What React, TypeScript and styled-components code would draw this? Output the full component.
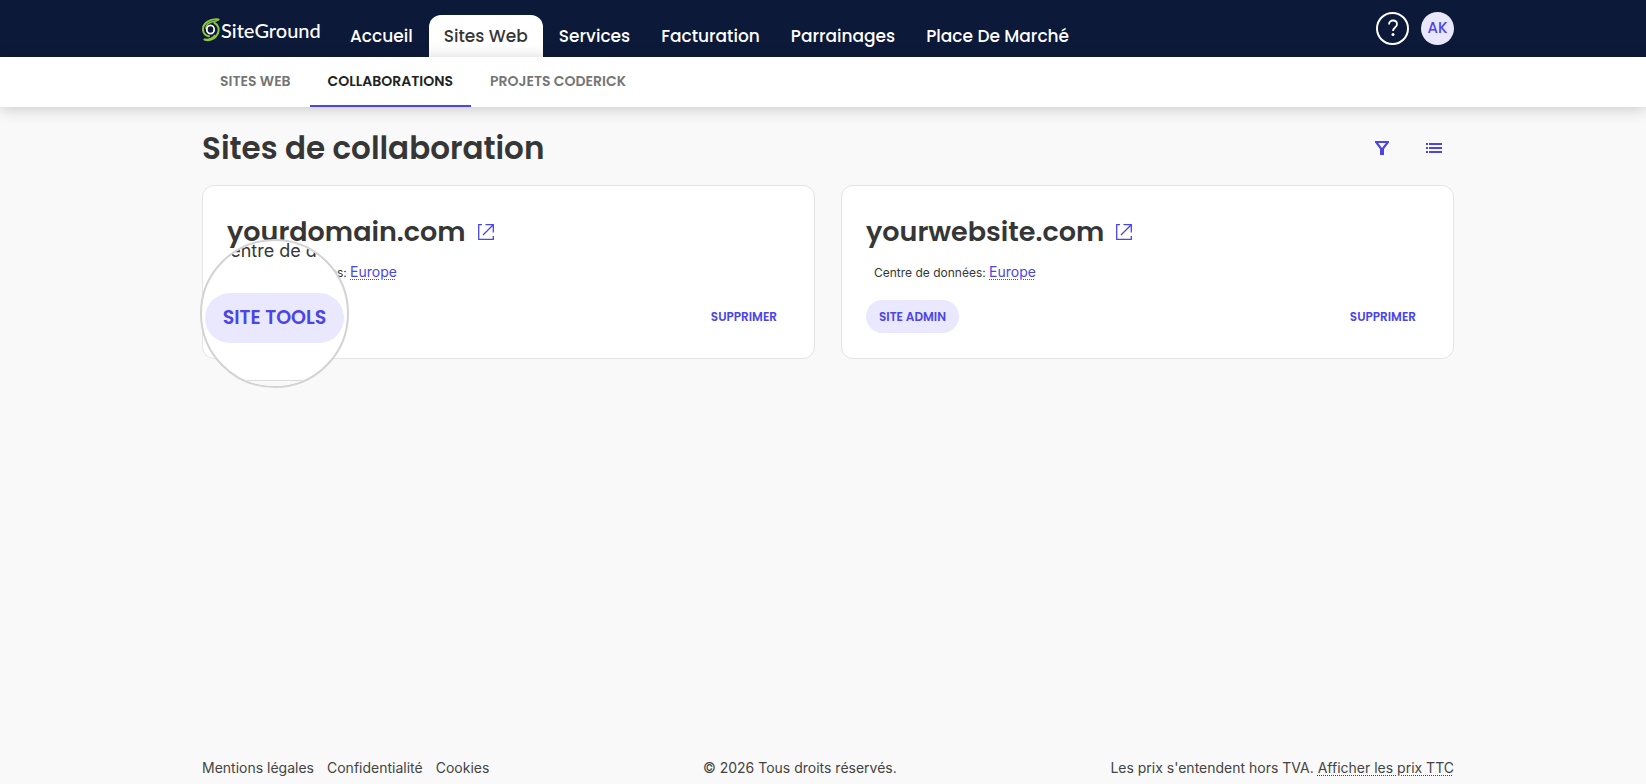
import React from "react";
import styled, { createGlobalStyle } from "styled-components";

const heading = `Poppins, Inter, "Liberation Sans", sans-serif`;
const accent = "#4b45e8";
const ink = "#363636";

const GlobalStyle = createGlobalStyle`
  *, *::before, *::after { box-sizing: border-box; }
  body { margin: 0; background: #f9f9f9; color: ${ink}; font-family: Inter, "Liberation Sans", sans-serif; }
  button { font: inherit; border: 0; background: none; padding: 0; cursor: pointer; }
  a { color: inherit; text-decoration: none; }
  h1, h2, p { margin: 0; }
`;

const Page = styled.div`
  min-height: 100vh;
  display: flex;
  flex-direction: column;
`;

const Container = styled.div`
  width: 100%;
  max-width: 1300px;
  margin: 0 auto;
  padding: 0 19px 0 29px;
`;

const TopBar = styled.header`
  background: #0c1939;
`;

const TopRow = styled(Container)`
  height: 57px;
  display: flex;
  align-items: flex-end;
`;

const Logo = styled.a`
  display: flex;
  align-items: center;
  gap: 1px;
  width: 133px;
  height: 55px;
  color: #fff;
  font: 500 20px/24px Lato, sans-serif;
`;

const MainNav = styled.nav`
  display: flex;
  flex: 1;
  gap: 1px;
`;

const MainLink = styled.a<{ $active?: boolean }>`
  height: 42px;
  padding: 0 15px;
  border-radius: 12px 12px 0 0;
  background: ${(p) => (p.$active ? "#fff" : "transparent")};
  color: ${(p) => (p.$active ? ink : "#fff")};
  font: 500 17px/42px ${heading};
  white-space: nowrap;
`;

const Account = styled.div`
  display: flex;
  align-items: center;
  gap: 12px;
  height: 57px;
  padding-bottom: 1px;
`;

const RoundButton = styled.button<{ $filled?: boolean }>`
  width: 33px;
  height: 33px;
  display: grid;
  place-items: center;
  border-radius: 50%;
  border: ${(p) => (p.$filled ? "0" : "2px solid #fff")};
  background: ${(p) => (p.$filled ? "#e8e7fd" : "transparent")};
  color: ${(p) => (p.$filled ? accent : "#fff")};
  font: 500 15px/20px ${heading};
`;

const SubBar = styled.div`
  background: #fff;
  box-shadow: 0 2px 16px rgba(0, 0, 0, 0.2);
`;

const SubNav = styled.nav`
  display: flex;
  gap: 1px;
`;

const SubLink = styled.a<{ $active?: boolean }>`
  height: 50px;
  padding: 0 18px;
  border-bottom: 2px solid ${(p) => (p.$active ? accent : "transparent")};
  color: ${(p) => (p.$active ? "#222" : "#757575")};
  font: 600 14px/48px ${heading};
  white-space: nowrap;
`;

const Main = styled.main`
  flex: 1;
`;

const TitleRow = styled.div`
  display: flex;
  align-items: center;
  justify-content: space-between;
  height: 48px;
  margin: 17px 0 13px;
`;

const Title = styled.h1`
  font: 600 31px/48px ${heading};
`;

const Tools = styled.div`
  display: flex;
  gap: 12px;
`;

const IconButton = styled.button`
  width: 40px;
  height: 40px;
  display: grid;
  place-items: center;
  color: ${accent};
`;

const Cards = styled.div`
  display: grid;
  grid-template-columns: 1fr 1fr;
  gap: 26px;
`;

const Card = styled.article`
  position: relative;
  padding: 25px 24px;
  border: 1px solid #e4e4e4;
  border-radius: 12px;
  background: #fff;
`;

const DomainRow = styled.div`
  display: flex;
  align-items: center;
  gap: 12px;
  height: 41px;
`;

const Domain = styled.h2`
  font: 600 27px/41px ${heading};
`;

const OpenLink = styled.a`
  display: grid;
  color: ${accent};
`;

const DataCenter = styled.p`
  padding: 8px 8px 0;
  font-size: 12px;
  line-height: 24px;
`;

const DottedLink = styled.a<{ $accent?: boolean }>`
  color: ${(p) => (p.$accent ? accent : "inherit")};
  font-size: 14px;
  text-decoration: underline dotted;
  text-decoration-thickness: 1px;
  text-underline-offset: 2px;
`;

const Actions = styled.div`
  display: flex;
  justify-content: space-between;
  height: 33px;
  margin-top: 15px;
`;

const ActionButton = styled.button<{ $soft?: boolean }>`
  margin-left: ${(p) => (p.$soft ? "0" : "auto")};
  padding: 0 13px;
  border-radius: 17px;
  background: ${(p) => (p.$soft ? "#e9e8fe" : "transparent")};
  color: ${accent};
  font: 600 12px/33px ${heading};
`;

const Lens = styled.div`
  position: absolute;
  left: -3px;
  top: 53px;
  width: 149px;
  height: 149px;
  display: flex;
  flex-direction: column;
  align-items: center;
  overflow: hidden;
  border: 2px solid #d3d3d3;
  border-radius: 50%;
  background: #fff;
`;

const LensCaption = styled.span`
  align-self: flex-start;
  margin-left: 15px;
  font-size: 18px;
  line-height: 20px;
  white-space: nowrap;
`;

const LensButton = styled.button`
  width: 139px;
  height: 50px;
  margin-top: 32px;
  flex: none;
  border-radius: 25px;
  background: #e9e8fe;
  color: ${accent};
  font: 600 19px/50px ${heading};
`;

const LensEdge = styled.div`
  width: 100%;
  flex: 1;
  margin-top: 37px;
  border-top: 1px solid #dcdcdc;
  background: #f9f9f9;
`;

const Footer = styled(Container)`
  display: flex;
  justify-content: space-between;
  padding-bottom: 4px;
  color: #444;
  font-size: 14px;
  line-height: 24px;
`;

const FooterLinks = styled.nav`
  display: flex;
  gap: 13px;
`;

const Swirl = () => (
  <svg width="18" height="24" viewBox="0 0 18 24" fill="none" strokeLinecap="round" aria-hidden="true">
    <path d="M16.500 1.500C8 .5 1 5 1 11.500 1 15 3.500 18 7 18.300" stroke="#8cc63f" strokeWidth="2" />
    <path d="M16.500 1.500c-2 2.300-5 2-8 3C5.500 5.500 4 8 4 10.500" stroke="#8cc63f" strokeWidth="1.500" />
    <path d="M12.500 5c4 1.800 5 6.500 3.300 10.500C13.500 20.500 8 23.500 2.500 21.500" stroke="#8cc63f" strokeWidth="2" />
    <path d="M2.500 21.500c4 .3 8-1 10-4" stroke="#8cc63f" strokeWidth="1.500" />
    <ellipse cx="8.500" cy="11.500" rx="3.700" ry="4.200" stroke="#fff" strokeWidth="1.800" />
  </svg>
);

const QuestionIcon = () => (
  <svg width="12" height="20" viewBox="0 0 12 20" fill="none" aria-hidden="true">
    <path d="M2 6.500C2 4 3.700 2.500 6 2.500s4 1.500 4 3.700c0 3.300-4 3.300-4 6.800" stroke="currentColor" strokeWidth="1.800" />
    <circle cx="6" cy="16.500" r="1.500" fill="currentColor" />
  </svg>
);

const OpenIcon = () => (
  <svg width="16" height="16" viewBox="0 0 16 16" fill="none" stroke="currentColor" strokeWidth="1.300" aria-hidden="true">
    <path d="M4 .7H.7v14.600h14.600V12M7.500 .7h7.800v7.800M15 1 5 11" />
  </svg>
);

const FilterIcon = () => (
  <svg width="14" height="14" viewBox="0 0 14 14" fill="currentColor" aria-hidden="true">
    <path fillRule="evenodd" d="M0 0h14v1.500L9 8v6H5V8L0 1.500zM3.200 2 7 7l3.800-5z" />
  </svg>
);

const ListIcon = () => (
  <svg width="16" height="10" viewBox="0 0 16 10" fill="currentColor" aria-hidden="true">
    <path d="M0 0h2v2H0zM0 4h2v2H0zM0 8h2v2H0zM3 0h13v2H3zM3 4h13v2H3zM3 8h13v2H3z" />
  </svg>
);

const mainLinks = ["Accueil", "Sites Web", "Services", "Facturation", "Parrainages", "Place De Marché"];
const subLinks = ["SITES WEB", "COLLABORATIONS", "PROJETS CODERICK"];

type SiteProps = { domain: string; children: React.ReactNode };

const SiteCard = ({ domain, children }: SiteProps) => (
  <Card>
    <DomainRow>
      <Domain>{domain}</Domain>
      <OpenLink href="#" aria-label={`Ouvrir ${domain}`}>
        <OpenIcon />
      </OpenLink>
    </DomainRow>
    <DataCenter>
      Centre de données: <DottedLink $accent href="#">Europe</DottedLink>
    </DataCenter>
    <Actions>
      {children}
      <ActionButton>SUPPRIMER</ActionButton>
    </Actions>
  </Card>
);

export default function App() {
  return (
    <Page>
      <GlobalStyle />
      <TopBar>
        <TopRow>
          <Logo href="#">
            <Swirl />
            SiteGround
          </Logo>
          <MainNav>
            {mainLinks.map((label) => (
              <MainLink key={label} href="#" $active={label === "Sites Web"}>
                {label}
              </MainLink>
            ))}
          </MainNav>
          <Account>
            <RoundButton aria-label="Aide">
              <QuestionIcon />
            </RoundButton>
            <RoundButton $filled>AK</RoundButton>
          </Account>
        </TopRow>
      </TopBar>
      <SubBar>
        <Container>
          <SubNav>
            {subLinks.map((label) => (
              <SubLink key={label} href="#" $active={label === "COLLABORATIONS"}>
                {label}
              </SubLink>
            ))}
          </SubNav>
        </Container>
      </SubBar>
      <Main>
        <Container>
          <TitleRow>
            <Title>Sites de collaboration</Title>
            <Tools>
              <IconButton aria-label="Filtrer">
                <FilterIcon />
              </IconButton>
              <IconButton aria-label="Vue en liste">
                <ListIcon />
              </IconButton>
            </Tools>
          </TitleRow>
          <Cards>
            <SiteCard domain="yourdomain.com">
              <Lens>
                <LensCaption aria-hidden="true">Centre de d</LensCaption>
                <LensButton>SITE TOOLS</LensButton>
                <LensEdge />
              </Lens>
            </SiteCard>
            <SiteCard domain="yourwebsite.com">
              <ActionButton $soft>SITE ADMIN</ActionButton>
            </SiteCard>
          </Cards>
        </Container>
      </Main>
      <Footer as="footer">
        <FooterLinks>
          <a href="#">Mentions légales</a>
          <a href="#">Confidentialité</a>
          <a href="#">Cookies</a>
        </FooterLinks>
        <p>© 2026 Tous droits réservés.</p>
        <p>
          Les prix s'entendent hors TVA. <DottedLink href="#">Afficher les prix TTC</DottedLink>
        </p>
      </Footer>
    </Page>
  );
}
